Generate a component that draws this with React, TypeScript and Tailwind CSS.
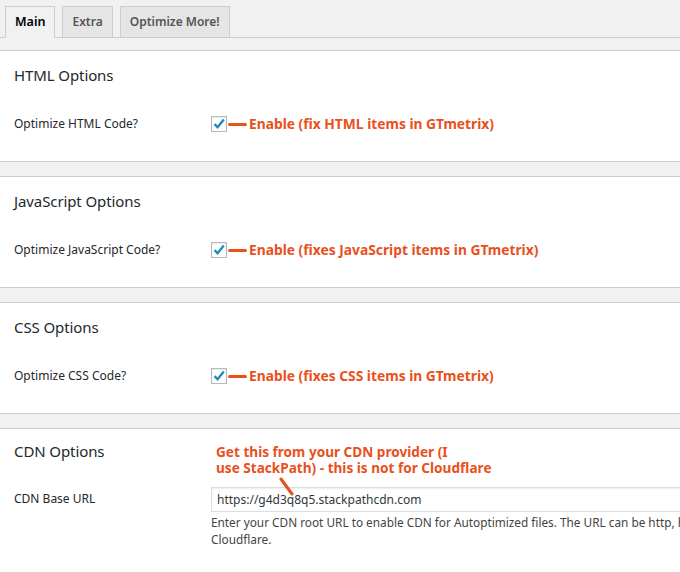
import React from "react";

const ORANGE = "#e9501c";

function Check() {
  return (
    <div className="relative flex items-center shrink-0">
      <div className="w-[16px] h-[16px] border border-[#b4b9be] bg-white flex items-center justify-center shadow-[inset_0_1px_2px_rgba(0,0,0,0.1)]">
        <svg width="14" height="14" viewBox="0 0 14 14">
          <path d="M2.5 7.2 L5.6 10.2 L11.8 2.6" fill="none" stroke="#1e8cbe" strokeWidth="2.4" strokeLinejoin="miter" />
        </svg>
      </div>
    </div>
  );
}

function OptSection({ title, label, note }: { title: string; label: string; note: string }) {
  return (
    <div className="bg-white border-y border-[#ccc] h-[112px] mb-[14px] px-[14px]">
      <h2 className="mt-[14px] h-[20px] leading-[20px] text-[15px] text-[#23282d] font-normal tracking-[-0.1px]">{title}</h2>
      <div className="mt-[31px] flex items-center h-[16px]">
        <div className="w-[197px] shrink-0 text-[12px] text-[#23282d]">{label}</div>
        <Check />
        <div className="w-[19px] h-[3px] rounded-full ml-[1px] mr-[2px] shrink-0" style={{ background: ORANGE }} />
        <div className="text-[13.8px] font-bold whitespace-nowrap" style={{ color: ORANGE }}>{note}</div>
      </div>
    </div>
  );
}

const tab = "-mb-px h-[32px] px-[9px] border border-[#ccc] text-[12.5px] font-semibold leading-[30px]";

export default function App() {
  return (
    <div
      className="w-[680px] h-[572px] overflow-hidden bg-[#f1f1f1] text-[#23282d]"
      style={{ fontFamily: '"Segoe UI", "Noto Sans", "Open Sans", sans-serif' }}
    >
      <div className="flex items-end pt-[6px] pl-[5px] gap-[7px] border-b border-[#ccc] h-[38px]">
        <div className={tab + " border-b-[#f1f1f1] bg-[#f1f1f1] text-black"}>Main</div>
        <div className={tab + " bg-[#e5e5e5] text-[#555] px-[8px] text-[12px]"}>Extra</div>
        <div className={tab + " bg-[#e5e5e5] text-[#555] px-[8px] text-[12px]"}>Optimize More!</div>
      </div>
      <div className="mt-[12px] w-[900px]">
        <OptSection title="HTML Options" label="Optimize HTML Code?" note="Enable (fix HTML items in GTmetrix)" />
        <OptSection title="JavaScript Options" label="Optimize JavaScript Code?" note="Enable (fixes JavaScript items in GTmetrix)" />
        <OptSection title="CSS Options" label="Optimize CSS Code?" note="Enable (fixes CSS items in GTmetrix)" />
        <div className="relative bg-white border-y border-[#ccc] h-[160px] px-[14px]">
          <h2 className="mt-[12px] h-[20px] leading-[20px] text-[15px] text-[#23282d] font-normal tracking-[-0.1px]">CDN Options</h2>
          <div className="mt-[26px] flex">
            <div className="w-[197px] shrink-0 text-[12px] text-[#23282d] leading-[24px]">CDN Base URL</div>
            <div className="flex-1 min-w-0">
              <div className="h-[25px] border border-[#ddd] bg-white shadow-[inset_0_1px_2px_rgba(0,0,0,0.07)] px-[5px] text-[12px] leading-[23px] text-[#32373c]">
                https://g4d3q8q5.stackpathcdn.com
              </div>
              <div className="mt-[2px] text-[11.8px] leading-[17px] text-[#444]">
                <div className="whitespace-nowrap">Enter your CDN root URL to enable CDN for Autoptimized files. The URL can be http, https or protocol-relative. This is not needed for</div>
                <div>Cloudflare.</div>
              </div>
            </div>
          </div>
          <div
            className="absolute left-[216px] top-[15px] text-[13.6px] font-bold leading-[16px] whitespace-nowrap"
            style={{ color: ORANGE }}
          >
            <div>Get this from your CDN provider (I</div>
            <div>use StackPath) - this is not for Cloudflare</div>
          </div>
          <svg className="absolute left-[278px] top-[48px]" width="18" height="20" viewBox="0 0 18 20">
            <line x1="3" y1="2" x2="14" y2="17" stroke={ORANGE} strokeWidth="3" strokeLinecap="round" />
          </svg>
        </div>
      </div>
    </div>
  );
}
